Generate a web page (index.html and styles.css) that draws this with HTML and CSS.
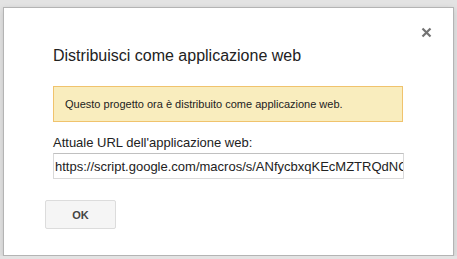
FILE: index.html
```html
<!DOCTYPE html>
<html lang="it">
<head>
  <meta charset="UTF-8" /><meta name="viewport" content="width=device-width, initial-scale=1.0" />
  <title>Distribuisci come applicazione web</title>
  <link rel="stylesheet" href="styles.css">
</head>
<body>
  <div class="dialog">
    <button class="close" aria-label="Chiudi">
      <svg width="11" height="11" viewBox="0 0 11 11"><path d="M1.5 1.5 L9.5 9.5 M9.5 1.5 L1.5 9.5" stroke="#737373" stroke-width="2.2" fill="none"/></svg>
    </button>
    <h1 class="title">Distribuisci come applicazione web</h1>
    <div class="notice">Questo progetto ora è distribuito come applicazione web.</div>
    <label class="url-label" for="urlInput">Attuale URL dell'applicazione web:</label>
    <input type="text" id="urlInput" class="url-input" readonly value="https://script.google.com/macros/s/ANfycbxqKEcMZTRQdNCp7wHq4Xe1Lz0/exec" />
    <div class="buttons">
      <button class="ok">OK</button>
    </div>
  </div>
</body>
</html>
```

FILE: styles.css
```css
body { margin:0; background:#e3e3e3; font-family: "Liberation Sans", Arial, sans-serif; }
.dialog { position:relative; box-sizing:border-box; margin:7px 0 0 3px; width:451px; height:249px; background:#fff; border:1px solid #b4b4b4; box-shadow:0 2px 6px rgba(0,0,0,0.15); padding:38px 0 0 49px; }
.close { position:absolute; top:19px; right:21px; width:11px; height:11px; padding:0; border:none; background:none; cursor:pointer; display:flex; }
.title { margin:0; font-size:16px; line-height:20px; font-weight:normal; color:#222; }
.notice { box-sizing:border-box; margin-top:20px; width:350px; height:36px; padding:0 11px; display:flex; align-items:center; background:#f9edbe; border:1px solid #f0c36d; font-size:11px; color:#222; }
.url-label { display:block; margin-top:13px; font-size:13px; line-height:16px; color:#222; }
.url-input { display:block; box-sizing:border-box; margin-top:2px; width:351px; height:26px; padding:0 0 0 1px; border:1px solid #d9d9d9; border-top-color:#c0c0c0; font-family:inherit; font-size:13px; color:#222; outline:none; }
.buttons { margin-top:21px; margin-left:-8px; }
.ok { box-sizing:border-box; width:71px; height:29px; background:#f5f5f5; border:1px solid #dcdcdc; border-radius:2px; font-family:inherit; font-size:11px; font-weight:bold; color:#444; cursor:pointer; }
```
